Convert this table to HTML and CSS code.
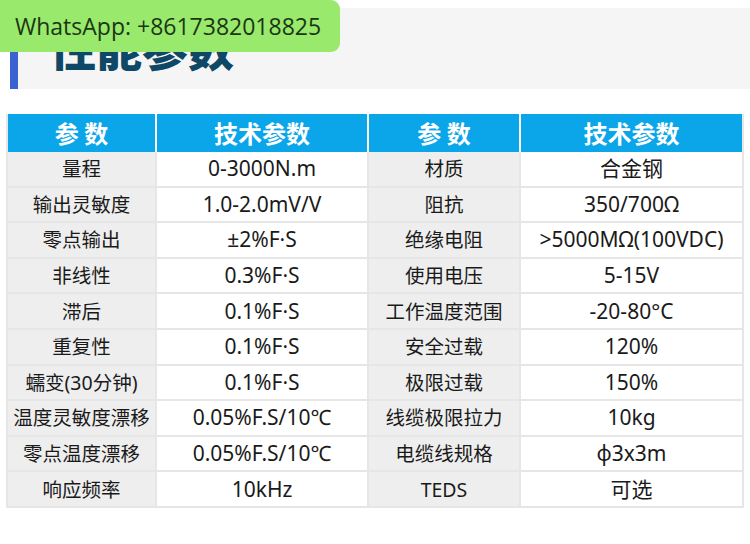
FILE: index.html
```html
<!DOCTYPE html>
<html lang="zh">
<head>
<meta charset="utf-8">
<link rel="stylesheet" href="styles.css">
</head>
<body>
<div class="badge">WhatsApp: +8617382018825</div>
<div class="band"><h1 class="title">性能参数</h1></div>
<table class="spec">
  <colgroup>
    <col class="c1"><col class="c2"><col class="c3"><col class="c4">
  </colgroup>
  <thead>
    <tr><th>参 数</th><th>技术参数</th><th>参 数</th><th>技术参数</th></tr>
  </thead>
  <tbody>
    <tr><td class="k">量程</td><td>0-3000N.m</td><td class="k">材质</td><td>合金钢</td></tr>
    <tr><td class="k">输出灵敏度</td><td>1.0-2.0mV/V</td><td class="k">阻抗</td><td>350/700Ω</td></tr>
    <tr><td class="k">零点输出</td><td>±2%F·S</td><td class="k">绝缘电阻</td><td>&gt;5000MΩ(100VDC)</td></tr>
    <tr><td class="k">非线性</td><td>0.3%F·S</td><td class="k">使用电压</td><td>5-15V</td></tr>
    <tr><td class="k">滞后</td><td>0.1%F·S</td><td class="k">工作温度范围</td><td>-20-80°C</td></tr>
    <tr><td class="k">重复性</td><td>0.1%F·S</td><td class="k">安全过载</td><td>120%</td></tr>
    <tr><td class="k">蠕变(30分钟)</td><td>0.1%F·S</td><td class="k">极限过载</td><td>150%</td></tr>
    <tr><td class="k">温度灵敏度漂移</td><td>0.05%F.S/10℃</td><td class="k">线缆极限拉力</td><td>10kg</td></tr>
    <tr><td class="k">零点温度漂移</td><td>0.05%F.S/10℃</td><td class="k">电缆线规格</td><td>φ3x3m</td></tr>
    <tr><td class="k">响应频率</td><td>10kHz</td><td class="k">TEDS</td><td>可选</td></tr>
  </tbody>
</table>
</body>
</html>
```
FILE: styles.css
```css
html, body {
  margin: 0;
  padding: 0;
  background: #ffffff;
  font-family: "Noto Sans", "Noto Sans CJK SC", sans-serif;
}
.badge {
  position: absolute;
  left: 0;
  top: 0;
  width: 340px;
  height: 52px;
  box-sizing: border-box;
  padding-left: 15px;
  background: #98e96c;
  border-radius: 0 9px 9px 0;
  color: #1c3614;
  font-family: "Open Sans", "Noto Sans", sans-serif;
  font-size: 23px;
  line-height: 52px;
  white-space: nowrap;
  z-index: 2;
}
.band {
  margin: 8px 0 0 10px;
  height: 81px;
  background: #f5f5f5;
  border-left: 8px solid #3b62d2;
  display: flex;
  align-items: flex-end;
}
.title {
  margin: 0 0 18px 32px;
  font-family: "Noto Sans CJK SC", sans-serif;
  font-weight: 900;
  font-size: 46px;
  line-height: 50px;
  color: #0e4866;
}
.spec {
  margin: 25px 0 0 6px;
  width: 738px;
  border-collapse: separate;
  border-spacing: 0;
  table-layout: fixed;
  border-left: 2px solid #e6e6e6;
}
.c1 { width: 149px; }
.c2 { width: 212px; }
.c3 { width: 152px; }
.c4 { width: 223px; }
.spec th {
  height: 38px;
  padding: 0;
  background: #0aa6e9;
  color: #ffffff;
  font-family: "Noto Sans CJK SC", sans-serif;
  font-weight: 700;
  font-size: 24px;
  line-height: 38px;
  text-align: center;
  border-right: 2px solid #ffffff;
}
.spec th:last-child { border-right: 2px solid #e6e6e6; }
.spec td {
  height: 33.6px;
  padding: 0;
  background: #ffffff;
  color: #1a1a1a;
  font-family: "Noto Sans", "Noto Sans CJK SC", sans-serif;
  font-size: 21px;
  line-height: 33px;
  text-align: center;
  white-space: nowrap;
  border-right: 2px solid #e6e6e6;
  border-bottom: 2px solid #e6e6e6;
}
.spec td.k {
  background: #eeeeee;
  font-size: 19.5px;
}
```
